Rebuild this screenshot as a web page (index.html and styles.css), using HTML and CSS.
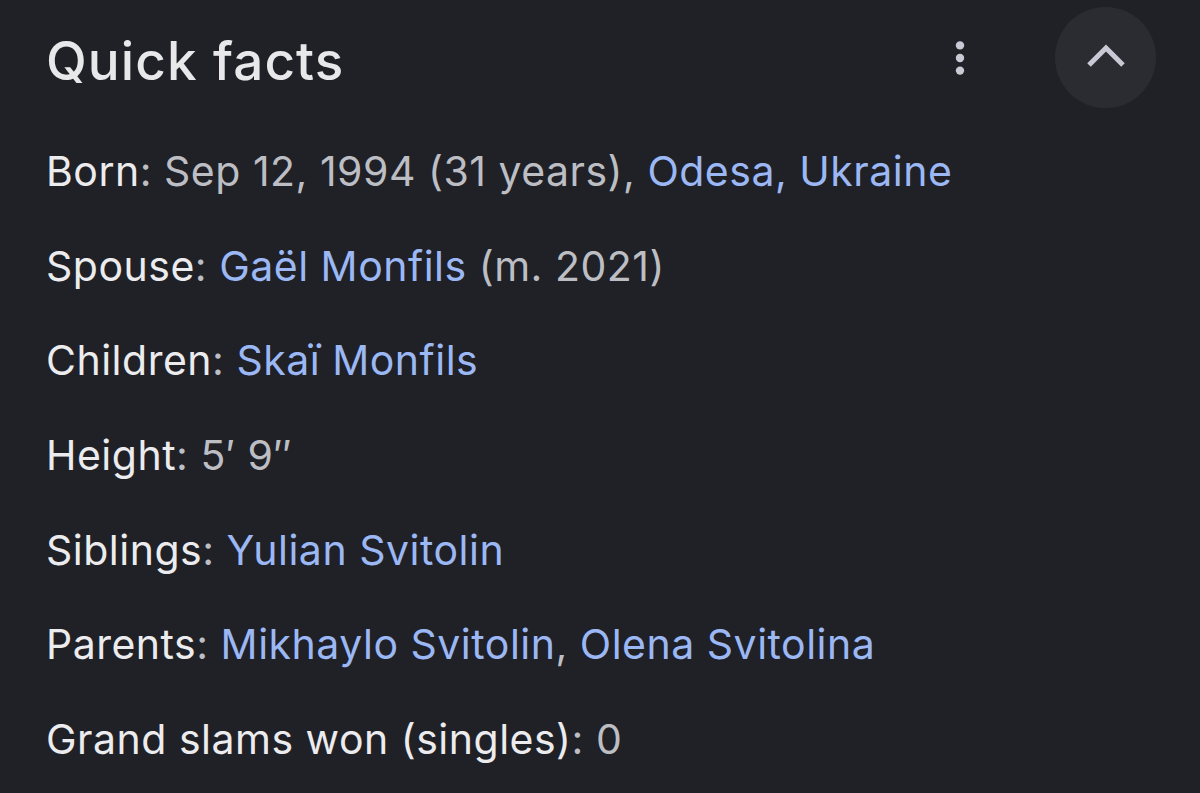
FILE: index.html
```html
<!DOCTYPE html>
<html lang="en">
<head>
    <meta charset="UTF-8">
    <meta name="viewport" content="width=device-width, initial-scale=1.0">
    <title>Quick facts</title>
    <link rel="stylesheet" href="styles.css">
</head>
<body>
    <div class="facts">
        <div class="facts-header">
            <h2 class="facts-title">Quick facts</h2>
            <button class="more-btn" aria-label="More options">
                <svg width="12" height="38" viewBox="0 0 12 38">
                    <circle cx="6" cy="6.4" r="4.2"/>
                    <circle cx="6" cy="19" r="4.2"/>
                    <circle cx="6" cy="31.6" r="4.2"/>
                </svg>
            </button>
            <button class="collapse-btn" aria-label="Collapse">
                <svg width="40" height="28" viewBox="0 0 40 28">
                    <path d="M3 21 L20 4 L37 21"/>
                </svg>
            </button>
        </div>

        <div class="facts-list">
            <p class="fact"><span class="label">Born</span>: <span class="value">Sep 12, 1994 (31 years), </span><a href="#">Odesa, Ukraine</a></p>
            <p class="fact"><span class="label">Spouse</span>: <a href="#">Gaël Monfils</a><span class="value"> (m. 2021)</span></p>
            <p class="fact"><span class="label">Children</span>: <a href="#">Skaï Monfils</a></p>
            <p class="fact"><span class="label">Height</span>: <span class="value">5′ 9″</span></p>
            <p class="fact"><span class="label">Siblings</span>: <a href="#">Yulian Svitolin</a></p>
            <p class="fact"><span class="label">Parents</span>: <a href="#">Mikhaylo Svitolin</a><span class="value">, </span><a href="#">Olena Svitolina</a></p>
            <p class="fact"><span class="label">Grand slams won (singles)</span>: <span class="value">0</span></p>
        </div>
    </div>
</body>
</html>
```

FILE: styles.css
```css
body {
    margin: 0;
    background-color: #202127;
    font-family: Inter, Roboto, sans-serif;
    color: #e8e8ea;
}
.facts {
    padding: 0 44px 0 46px;
}
.facts-header {
    display: flex;
    align-items: center;
    height: 115px;
}
.facts-title {
    flex: 1;
    align-self: flex-start;
    margin: 29px 0 0;
    font-size: 53px;
    line-height: 64px;
    font-weight: 500;
    letter-spacing: 1.1px;
    color: #e8e8ea;
}
button {
    background: none;
    border: none;
    padding: 0;
    cursor: pointer;
}
.more-btn {
    display: flex;
    margin-right: 89px;
}
.more-btn svg circle {
    fill: #c9c9d6;
}
.collapse-btn {
    width: 101px;
    height: 101px;
    border-radius: 50%;
    background-color: #2b2c32;
    display: flex;
    align-items: center;
    justify-content: center;
}
.collapse-btn svg path {
    fill: none;
    stroke: #c9c9d6;
    stroke-width: 5;
}
.facts-list {
    padding-top: 9px;
}
.fact {
    margin: 0;
    height: 94.7px;
    line-height: 95px;
    font-size: 41px;
    letter-spacing: 0.5px;
    color: #bcbec4;
}
.label {
    color: #ececee;
}
.value {
    color: #bcbec4;
}
.fact a {
    color: #9bb8f4;
    text-decoration: none;
}
```
